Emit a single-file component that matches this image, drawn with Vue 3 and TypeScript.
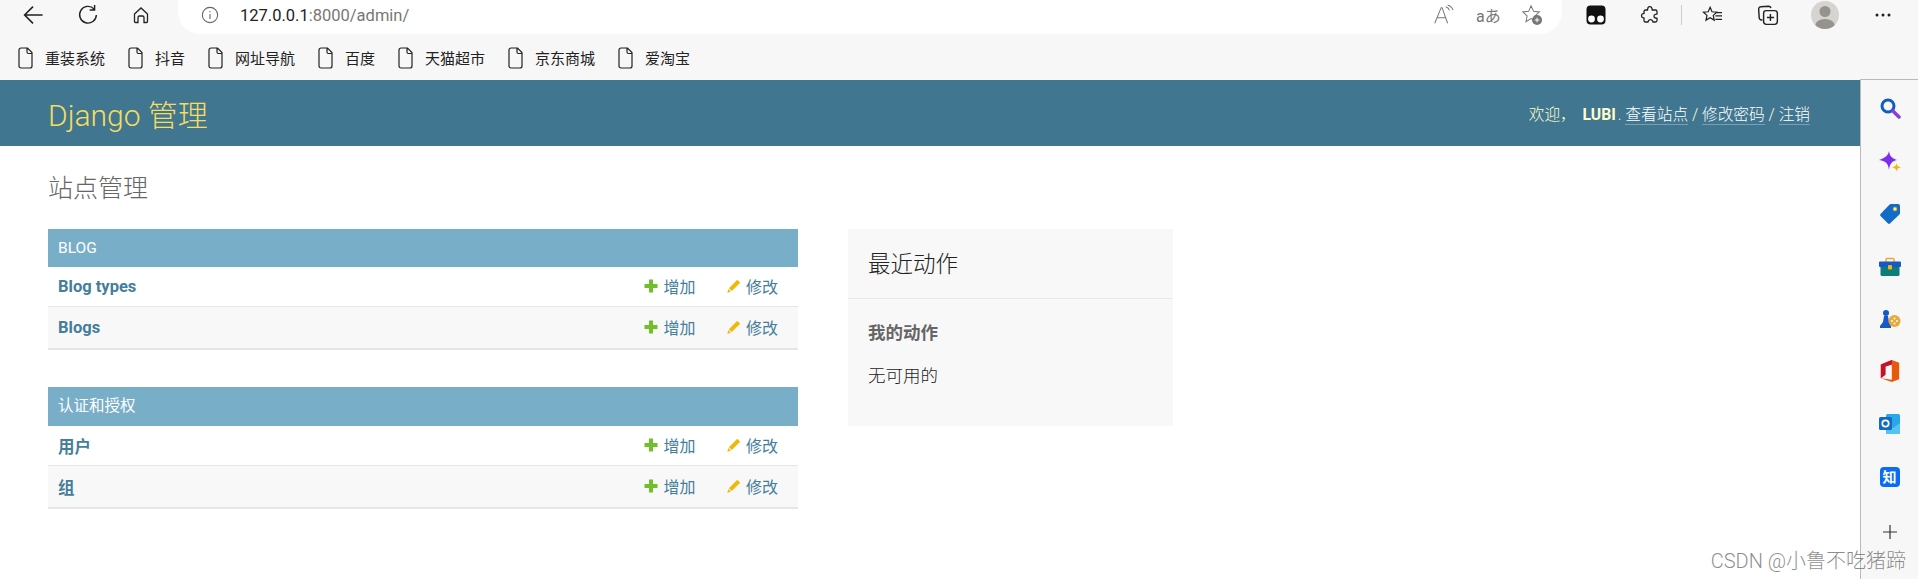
<script setup lang="ts">
interface Row { name: string }
interface Mod { title: string; rows: Row[] }
const bookmarks: string[] = ['重装系统', '抖音', '网址导航', '百度', '天猫超市', '京东商城', '爱淘宝']
const modules: Mod[] = [
  { title: 'BLOG', rows: [{ name: 'Blog types' }, { name: 'Blogs' }] },
  { title: '认证和授权', rows: [{ name: '用户' }, { name: '组' }] },
]
</script>

<template>
  <div class="page">
    <div class="toolbar">
      <div class="nav">
        <svg class="ic back" viewBox="0 0 20 20"><path d="M18 10H3M10 3l-7 7 7 7" /></svg>
        <svg class="ic reload" viewBox="0 0 20 20"><path d="M15.500 4.500A7.600 7.600 0 1 0 17.600 10M16 1v4.500h-4.500" /></svg>
        <svg class="ic home" viewBox="0 0 20 20"><path d="M3.500 9 10 3l6.500 6v7.500a1 1 0 0 1-1 1H13v-5a1.500 1.500 0 0 0-1.500-1.500h-3A1.500 1.500 0 0 0 7 12.500v5H4.500a1 1 0 0 1-1-1z" /></svg>
      </div>
      <div class="omni">
        <svg class="info" viewBox="0 0 20 20"><circle cx="10" cy="10" r="8.500" /><path d="M10 9v5.500M10 5.500v1.400" /></svg>
        <span class="url"><span class="host">127.0.0.1</span>:8000/admin/</span>
        <div class="omni-right">
          <svg class="oi" viewBox="0 0 24 24"><path d="M3 21 10 4h1l6 17M5.500 15h9.500M15 3c2 .5 3.500 2 4 4M17 1c3 .8 5 2.800 6 5.500" /></svg>
          <span class="aa">aあ</span>
          <svg class="oi" viewBox="0 0 24 24"><path d="m11 2 2.700 6 6.300.7-4.700 4.300 1.300 6.300L11 16l-5.600 3.300 1.300-6.300L2 8.700 8.300 8z" /><circle cx="17.500" cy="17.500" r="5.500" fill="#777" stroke="none" /><path d="M17.500 15v5M15 17.500h5" stroke="#fff" /></svg>
        </div>
      </div>
      <div class="exts">
        <svg class="e1" viewBox="0 0 20 20"><rect x="0.500" y="0.500" width="19" height="19" rx="4" fill="#111" /><circle cx="5.500" cy="14" r="3.400" fill="#fff" /><circle cx="14.500" cy="14" r="3.400" fill="#fff" /></svg>
        <svg class="ic e2" viewBox="0 0 20 20"><path d="M8 2.500c1-1.500 3.500-1 4 1l.2 1.500h3.300c1 0 1.500.6 1.500 1.500V9l-1.500.3c-2 .3-2 3.400 0 3.700l1.500.3v2.200c0 1-.6 1.500-1.500 1.500h-2.500l-.4-1c-.7-1.800-3.500-1.800-4.200 0l-.4 1H5.500c-1 0-1.500-.6-1.500-1.500V13l-1-.3c-2-.6-2-3.400 0-4l1-.3V6.500C4 5.600 4.600 5 5.500 5h2z" /></svg>
        <span class="sep"></span>
        <svg class="ic e3" viewBox="0 0 22 20"><path d="m8.500 2 2 4.600 5 .5-3.700 3.300 1 5-4.300-2.600-4.300 2.600 1-5L1.500 7.100l5-.5zM15 7.500h6M14 11h7M14 14.500h7" /></svg>
        <svg class="ic e4" viewBox="0 0 20 20"><path d="M5 14.500H4a2 2 0 0 1-2-2l-.5-8A2 2 0 0 1 3.500 2.500l7-.5c1 0 2 .7 2.200 1.700" /><rect x="6" y="6" width="12.500" height="12.500" rx="2.500" /><path d="M12.200 9v6.500M9 12.200h6.500" /></svg>
        <svg class="avatar" viewBox="0 0 28 28"><defs><clipPath id="av"><circle cx="14" cy="14" r="14" /></clipPath></defs><circle cx="14" cy="14" r="14" fill="#d6d4d0" /><g clip-path="url(#av)" fill="#96928e"><circle cx="14" cy="10.500" r="5.500" /><ellipse cx="14" cy="25" rx="10" ry="7" /></g></svg>
        <svg class="more" viewBox="0 0 16 4"><circle cx="2" cy="2" r="1.500" /><circle cx="8" cy="2" r="1.500" /><circle cx="14" cy="2" r="1.500" /></svg>
      </div>
    </div>

    <div class="bookmarks">
      <div v-for="b in bookmarks" :key="b" class="bm">
        <svg class="doc" viewBox="0 0 15 22"><path d="M3 1h6.500L14 5.500V19a2 2 0 0 1-2 2H3a2 2 0 0 1-2-2V3a2 2 0 0 1 2-2zM9 1v4a1.500 1.500 0 0 0 1.500 1.500H14" /></svg>
        <span>{{ b }}</span>
      </div>
    </div>

    <div class="main">
      <div class="site">
        <header class="hdr">
          <div class="brand">Django 管理</div>
          <div class="tools">
            欢迎， <strong>LUBI</strong>.
            <a>查看站点</a> / <a>修改密码</a> / <a>注销</a>
          </div>
        </header>
        <div class="content">
          <h1 class="title">站点管理</h1>
          <div class="cols">
            <div class="left">
              <section v-for="m in modules" :key="m.title" class="module">
                <div class="cap">{{ m.title }}</div>
                <div v-for="r in m.rows" :key="r.name" class="row">
                  <span class="name">{{ r.name }}</span>
                  <span class="act add">
                    <svg class="sym" viewBox="0 0 14 14"><path fill="#70bf2b" d="M5 .5h4V5h4.500v4H9v4.500H5V9H.5V5H5z" /></svg>增加
                  </span>
                  <span class="act chg">
                    <svg class="sym" viewBox="0 0 14 14"><path fill="#efb80b" d="M10.300.8 13.200 3.700 4.800 12.100 1.900 9.200zM1.300 10.100 3.900 12.700.3 13.700z" /></svg>修改
                  </span>
                </div>
              </section>
            </div>
            <aside class="recent">
              <h2>最近动作</h2>
              <div class="rbody">
                <h3>我的动作</h3>
                <p>无可用的</p>
              </div>
            </aside>
          </div>
        </div>
      </div>
      <div class="side">
        <svg class="s" viewBox="0 0 22 22"><circle cx="9" cy="9" r="6" fill="none" stroke="#0f5cc4" stroke-width="3" /><path d="m14 14 6 6" stroke="#8a3fd8" stroke-width="3.500" stroke-linecap="round" /></svg>
        <svg class="s sparkle" viewBox="0 0 22 22"><path fill="#7a2ff0" d="M10 0c.8 5 2.500 7 8 9-5.500 1.500-7.200 3.500-8 10-.8-6.500-2.500-8.500-10-10C5.500 7 9.200 5 10 0z" /><path fill="#f6b40e" d="M17.500 12c.4 2.600 1.400 3.600 4.500 4.500-3.100.4-4.100 1.400-4.500 4.500-.4-3.100-1.400-4.100-4.500-4.500 3.100-.9 4.100-1.900 4.500-4.500z" /></svg>
        <svg class="s tag" viewBox="0 0 22 22"><path fill="#0f6cc8" d="M12 1h7a2 2 0 0 1 2 2v7a2 2 0 0 1-.6 1.400L11 20.500a1.500 1.500 0 0 1-2 0l-7.500-7.500a1.500 1.500 0 0 1 0-2L10.600 1.600A2 2 0 0 1 12 1z" /><circle cx="16" cy="6" r="1.800" fill="#fde9a0" stroke="#f6b40e" /></svg>
        <svg class="s tight" viewBox="0 0 22 20"><path fill="none" stroke="#eba92c" stroke-width="1.500" d="M7 5V2.500A1 1 0 0 1 8 1.500h6a1 1 0 0 1 1 1V5" /><path fill="#0d7d78" d="M1.500 9h19v8.500a1.500 1.500 0 0 1-1.500 1.500H3a1.500 1.500 0 0 1-1.500-1.500z" /><path fill="#1559c8" d="M0 5.500a1 1 0 0 1 1-1h20a1 1 0 0 1 1 1V9a1 1 0 0 1-1 1H1a1 1 0 0 1-1-1z" /><rect x="9" y="8" width="4" height="4.500" rx="1" fill="#f6b40e" /></svg>
        <svg class="s tight" viewBox="0 0 22 20"><circle cx="7" cy="4" r="3" fill="#1559c8" /><path fill="#1559c8" d="M5 7h4l1 6 2 3v3H1v-2l3-4z" /><circle cx="15.500" cy="12" r="6" fill="#e9a83a" /><circle cx="13" cy="12" r="1" fill="#fff" /><circle cx="15.500" cy="9.500" r="1" fill="#fff" /><circle cx="18" cy="12" r="1" fill="#fff" /><circle cx="15.500" cy="14.500" r="1" fill="#fff" /></svg>
        <svg class="s" viewBox="0 0 20 24"><path fill="#e8590c" d="M12 0 20 3v18l-8 3-12-4 12 1.500V5L5 7v9l-5 4V5z" /><path fill="#c4122f" d="M12 0 0 5v15l5-4V7l7-2z" /></svg>
        <svg class="s loose" viewBox="0 0 22 22"><rect x="7" y="1" width="14" height="20" rx="1.500" fill="#2aa7e8" /><path d="M7 10l7 5 7-5v10a1 1 0 0 1-1 1H8a1 1 0 0 1-1-1z" fill="#55c3f0" /><rect x="0" y="4" width="13" height="13" rx="1.500" fill="#0f6cc0" /><circle cx="6.500" cy="10.500" r="3.200" fill="none" stroke="#fff" stroke-width="1.700" /></svg>
        <span class="zhi">知</span>
        <svg class="plus" viewBox="0 0 14 14"><path d="M7 0v14M0 7h14" /></svg>
      </div>
    </div>
    <div class="mark">CSDN @小鲁不吃猪蹄</div>
  </div>
</template>

<style>
html, body { margin: 0; background: #fff; }
</style>

<style scoped>
.page {
  position: relative;
  width: 1918px;
  height: 579px;
  overflow: hidden;
  background: #f7f7f7;
  font-family: Roboto, "Noto Sans CJK SC", sans-serif;
  color: #333;
}
.toolbar { height: 35px; display: flex; align-items: flex-start; }
.nav { width: 178px; height: 30px; display: flex; align-items: center; padding-left: 21px; gap: 32px; box-sizing: border-box; flex: none; }
.ic { width: 22px; height: 22px; fill: none; stroke: #222; stroke-width: 1.300; flex: none; }
.ic.back { width: 24px; height: 24px; }
.ic.home { width: 20px; height: 20px; }
.omni {
  width: 1384px;
  flex: none;
  height: 34px;
  background: #fff;
  border-radius: 0 0 22px 22px;
  display: flex;
  align-items: center;
  padding: 0 0 4px 23px;
  box-sizing: border-box;
  font-size: 16.500px;
}
.info { width: 18px; height: 18px; fill: none; stroke: #666; stroke-width: 1.200; margin-right: 21px; flex: none; }
.url { color: #777; }
.host { color: #222; }
.omni-right { margin-left: auto; display: flex; align-items: center; gap: 21px; padding-right: 19px; }
.oi { width: 22px; height: 22px; fill: none; stroke: #777; stroke-width: 1.100; flex: none; }
.aa { font-size: 16px; color: #777; width: 25px; white-space: nowrap; margin: 0 -1px 0 1px; }
.exts { flex: 1; height: 30px; display: flex; align-items: center; padding-left: 24px; }
.e1 { width: 20px; height: 20px; margin-right: 34px; flex: none; }
.e2 { width: 20px; height: 20px; }
.sep { width: 1px; height: 20px; background: #ccc; margin: 0 20px 0 21px; flex: none; }
.e3 { width: 21px; height: 20px; margin-right: 34px; }
.e4 { margin-right: 32px; }
.avatar { width: 28px; height: 28px; margin-right: 36px; flex: none; }
.more { width: 16px; height: 4px; fill: #222; flex: none; }
.bookmarks { height: 45px; display: flex; align-items: center; padding-left: 18px; font-size: 15px; color: #222; }
.bm { display: flex; align-items: center; gap: 12px; margin-right: 23px; }
.doc { width: 15px; height: 22px; fill: none; stroke: #222; stroke-width: 1.200; flex: none; }
.main { display: flex; height: 499px; }
.site { width: 1860px; flex: none; height: 100%; background: #fff; }
.side {
  flex: 1;
  border-left: 1px solid #b9b9b9;
  border-top: 1px solid #b9b9b9;
  margin-top: -1px;
  display: flex;
  flex-direction: column;
  align-items: center;
  padding-top: 17px;
}
.s { width: 22px; height: 22px; margin-bottom: 31px; flex: none; }
.s.sparkle { margin-top: 1px; margin-bottom: 30px; }
.s.tight { margin-bottom: 30px; }
.s.loose { margin-bottom: 32px; }
.zhi {
  width: 20px; height: 20px; border-radius: 4px; background: #0a6cf5; color: #fff;
  font-size: 14px; line-height: 20px; text-align: center; font-weight: 700; margin-bottom: 38px;
}
.plus { width: 14px; height: 14px; stroke: #333; stroke-width: 1.200; fill: none; }
.hdr {
  height: 66px;
  background: #417690;
  display: flex;
  align-items: center;
  justify-content: space-between;
  padding: 0 50px 0 48px;
}
.brand { font-size: 30px; font-weight: 300; color: #f5dd5d; }
.tools { font-size: 15.700px; font-weight: 300; color: #ffc; white-space: pre-wrap; }
.tools strong { font-weight: 700; margin-left: 3px; margin-right: 2px; }
.tools a { color: #fff; border-bottom: 1px solid rgba(255, 255, 255, .3); }
.content { padding-left: 48px; }
.title { margin: 0; padding-top: 25px; height: 58px; font-size: 25px; line-height: 36px; font-weight: 300; color: #666; }
.cols { display: flex; align-items: flex-start; }
.left { width: 750px; flex: none; margin-right: 50px; }
.module { margin-bottom: 37px; }
.module + .module .cap { height: 39px; line-height: 39px; }
.cap { height: 38px; line-height: 38px; background: #79aec8; color: #fff; font-size: 15.500px; padding-left: 10px; }
.row {
  height: 39px;
  display: flex;
  align-items: center;
  padding: 0 20px 0 10px;
  border-bottom: 1px solid #e6e6e6;
  font-size: 16px;
  color: #447e9b;
}
.row + .row { background: #f8f8f8; border-bottom-width: 2px; height: 41px; }
.name { font-weight: 700; flex: 1; font-size: 16.500px; }
.act { display: flex; align-items: center; gap: 5px; margin-top: -2px; }
.add { width: 82.500px; }
.sym { width: 14px; height: 14px; flex: none; }
.recent { width: 325px; height: 197px; background: #f8f8f8; flex: none; }
.recent h2 { margin: 0; height: 70px; line-height: 70px; padding-left: 20px; font-size: 22.500px; font-weight: 300; color: #222; border-bottom: 1px solid #e8e8e8; box-sizing: border-box; }
.rbody { padding: 22px 20px; }
.recent h3 { margin: 0 0 18px; font-size: 17.500px; line-height: 24px; font-weight: 700; color: #666; }
.recent p { margin: 0; font-size: 17.500px; line-height: 26px; font-weight: 300; color: #222; }
.mark { position: absolute; right: 12px; bottom: 6px; font-size: 20px; font-weight: 300; color: rgba(120, 120, 120, .85); line-height: 24px; }
</style>
